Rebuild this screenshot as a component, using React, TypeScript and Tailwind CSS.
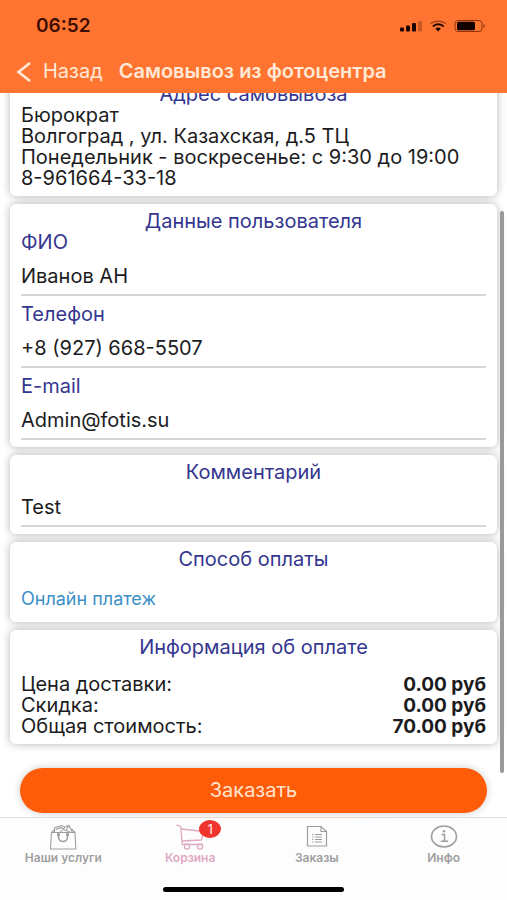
import type { ReactNode } from "react";

const fields = [
  { id: "name", label: "ФИО", type: "text", value: "Иванов АН" },
  { id: "phone", label: "Телефон", type: "tel", value: "+8 (927) 668-5507" },
  { id: "email", label: "E-mail", type: "email", value: "Admin@fotis.su" },
];

const totals = [
  { label: "Цена доставки:", value: "0.00 руб" },
  { label: "Скидка:", value: "0.00 руб" },
  { label: "Общая стоимость:", value: "70.00 руб" },
];

const inputClass =
  "block h-[43px] w-full border-b-2 border-[#d6d6d6] bg-transparent pt-1 text-[#1c1c1e] outline-none focus:border-[#ff5c0a]";

function StatusIcons() {
  return (
    <svg width="88" height="16" viewBox="0 0 88 16" aria-hidden="true">
      <g fill="#1c0500">
        <rect x="1" y="10.5" width="4" height="4" rx="1" />
        <rect x="7" y="8.5" width="4" height="6" rx="1" />
        <rect x="13" y="6" width="4" height="8.5" rx="1" />
        <rect x="19" y="4" width="4" height="10.5" rx="1" opacity="0.25" />
        <path d="M36.3 11.5q3-2 5.6 0L39.1 14.5z" />
      </g>
      <g fill="none" stroke="#1c0500" strokeLinecap="round">
        <path d="M34.5 9q4.800-3.400 9.600 0" strokeWidth="2" />
        <path d="M32 6.300q7.200-4.200 14.400 0" strokeWidth="1.3" opacity="0.45" />
      </g>
      <rect x="56" y="3.5" width="27" height="11" rx="3" fill="none" stroke="#8f3208" />
      <rect x="58" y="4.800" width="18" height="8.400" rx="1.5" fill="#120300" />
      <path d="M84.5 7v4q3-2 0-4z" fill="#8f3208" />
    </svg>
  );
}

function BagIcon() {
  return (
    <svg width="28" height="26" viewBox="0 0 28 26" fill="none" stroke="currentColor" strokeWidth="1.1" aria-hidden="true">
      <path d="M2.500 8.500h23.500l.8 16.500h-25.300z" strokeLinejoin="round" />
      <path d="M2.500 8.500l3.500-3.500M26 8.500l-3.500-3.500" />
      <path d="M5.500 8.500V4l7-2.500 3.500 1.500 4-1.500 3.500 7M7 5.500l5-2 4 3M16 3l-5 5.500M20 1.500l-3 5 5 2" />
      <path d="M9.500 10v3a4.500 4.500 0 0 0 9 0v-3" strokeWidth="1.600" />
      <circle cx="9.500" cy="10.500" r="1.100" />
      <circle cx="18.500" cy="10.500" r="1.100" />
    </svg>
  );
}

function CartIcon() {
  return (
    <svg width="28" height="26" viewBox="0 0 28 26" fill="none" stroke="currentColor" strokeWidth="1.300" strokeLinejoin="round" aria-hidden="true">
      <path d="M.8 1.200l4 1.300 1.400 18h20.300" strokeLinecap="round" />
      <path d="M5 5l23 2.500-2.500 8.500-19.500 1" />
      <circle cx="11" cy="22.500" r="2.600" />
      <circle cx="24" cy="22.500" r="2.600" />
    </svg>
  );
}

function OrdersIcon() {
  return (
    <svg width="28" height="26" viewBox="0 0 28 26" fill="none" stroke="currentColor" strokeWidth="1.200" aria-hidden="true">
      <path d="M4.500 2.500h13.500l5.500 5v14.500h-19z" />
      <path d="M18 2.500v5h5.500" />
      <path d="M9 10.500h1.500M12 10.500h7M9 13h1.500M12 13h7M9 15.500h1.500M12 15.500h7M9 18h1.500M12 18h7" />
    </svg>
  );
}

function InfoIcon() {
  return (
    <svg width="28" height="26" viewBox="0 0 28 26" fill="none" stroke="currentColor" strokeWidth="1.600" aria-hidden="true">
      <ellipse cx="14" cy="12.500" rx="12.500" ry="10.500" />
      <path d="M11.500 10.500h3v6.500M10.800 17.200h7.200" />
      <circle cx="14" cy="7.200" r="1.300" fill="currentColor" stroke="none" />
    </svg>
  );
}

const tabs = [
  { label: "Наши услуги", icon: <BagIcon />, color: "text-[#9f9f9f]" },
  { label: "Корзина", icon: <CartIcon />, color: "text-[#dfa9c2]", badge: 1 },
  { label: "Заказы", icon: <OrdersIcon />, color: "text-[#9f9f9f]" },
  { label: "Инфо", icon: <InfoIcon />, color: "text-[#9f9f9f]" },
];

function Card({ title, children }: { title: string; children: ReactNode }) {
  return (
    <section className="rounded-md bg-white px-[11px] py-[7px] shadow-[0_0_9px_rgba(0,0,0,0.3)]">
      <h2 className="text-center text-[#34368f]">{title}</h2>
      {children}
    </section>
  );
}

export default function App() {
  return (
    <div className="flex min-h-screen flex-col bg-white font-['Inter',sans-serif] text-[20px] leading-[21px] text-[#1c1c1e]">
      <header className="bg-[#ff7430]">
        <div className="flex h-[50px] items-center justify-between pr-5 pl-9">
          <time className="text-[19px] font-semibold text-[#3d0e00]">06:52</time>
          <StatusIcons />
        </div>
        <div className="flex h-[43px] items-center gap-4 px-4 text-[#ffe9d6]">
          <a href="#back" className="flex items-center gap-3">
            <svg width="15" height="20" viewBox="0 0 15 20" fill="none" stroke="currentColor" strokeWidth="2.600" aria-hidden="true">
              <path d="M14 1L2.500 10 14 19" />
            </svg>
            Назад
          </a>
          <h1 className="font-semibold whitespace-nowrap">Самовывоз из фотоцентра</h1>
        </div>
      </header>

      <main className="relative flex-1 overflow-hidden">
        {/* list is scrolled a little, so the first title slides under the header */}
        <div className="-mt-4 flex flex-col gap-2 px-[10px]">
          <Card title="Адрес самовывоза">
            <p>Бюрократ</p>
            <p>Волгоград , ул. Казахская, д.5 ТЦ</p>
            <p>Понедельник - воскресенье: с 9:30 до 19:00</p>
            <p>8-961664-33-18</p>
          </Card>

          <Card title="Данные пользователя">
            <div className="flex flex-col gap-2">
              {fields.map((f) => (
                <div key={f.id}>
                  <label htmlFor={f.id} className="block text-[#34368f]">
                    {f.label}
                  </label>
                  <input id={f.id} type={f.type} defaultValue={f.value} className={inputClass} />
                </div>
              ))}
            </div>
          </Card>

          <Card title="Комментарий">
            <div className="pt-px">
              <input type="text" aria-label="Комментарий" defaultValue="Test" className={inputClass} />
            </div>
          </Card>

          <Card title="Способ оплаты">
            <a href="#payment" className="mt-[18px] mb-1.5 block text-[18px] leading-[21px] text-[#3d8fc6]">
              Онлайн платеж
            </a>
          </Card>

          <Card title="Информация об оплате">
            <dl className="mt-4">
              {totals.map((t) => (
                <div key={t.label} className="flex justify-between">
                  <dt>{t.label}</dt>
                  <dd className="text-[19px] font-bold">{t.value}</dd>
                </div>
              ))}
            </dl>
          </Card>
        </div>

        <div className="px-5 pt-6 pb-[3px]">
          <button
            type="button"
            className="h-[45px] w-full rounded-full bg-[#ff5c0a] text-[#ffe3cf] shadow-[0_0_8px_rgba(0,0,0,0.2)]"
          >
            Заказать
          </button>
        </div>

        <div className="absolute top-[118px] right-[3px] bottom-11 w-1 rounded-full bg-[#999999]" />
      </main>

      <footer className="bg-[#fdfdfd]">
        <div className="h-px bg-linear-to-r from-[#dddddd] via-[#ecd5c2] to-[#dddddd]" />
        <nav className="grid grid-cols-4 pt-1.5">
          {tabs.map((t) => (
            <a
              key={t.label}
              href="#tab"
              className={`flex flex-col items-center text-[12px] leading-4 font-semibold ${t.color}`}
            >
              <span className="relative">
                <span className="block">{t.icon}</span>
                {t.badge && (
                  <span className="absolute -top-1 -right-[17px] flex h-[18px] w-[22px] items-center justify-center rounded-[50%] bg-[#f0352f] text-[13px] font-medium text-[#ffd9d6]">
                    {t.badge}
                  </span>
                )}
              </span>
              {t.label}
            </a>
          ))}
        </nav>
        <div className="mx-auto mt-[21px] mb-2 h-[5px] w-[181px] rounded-full bg-black" />
      </footer>
    </div>
  );
}
